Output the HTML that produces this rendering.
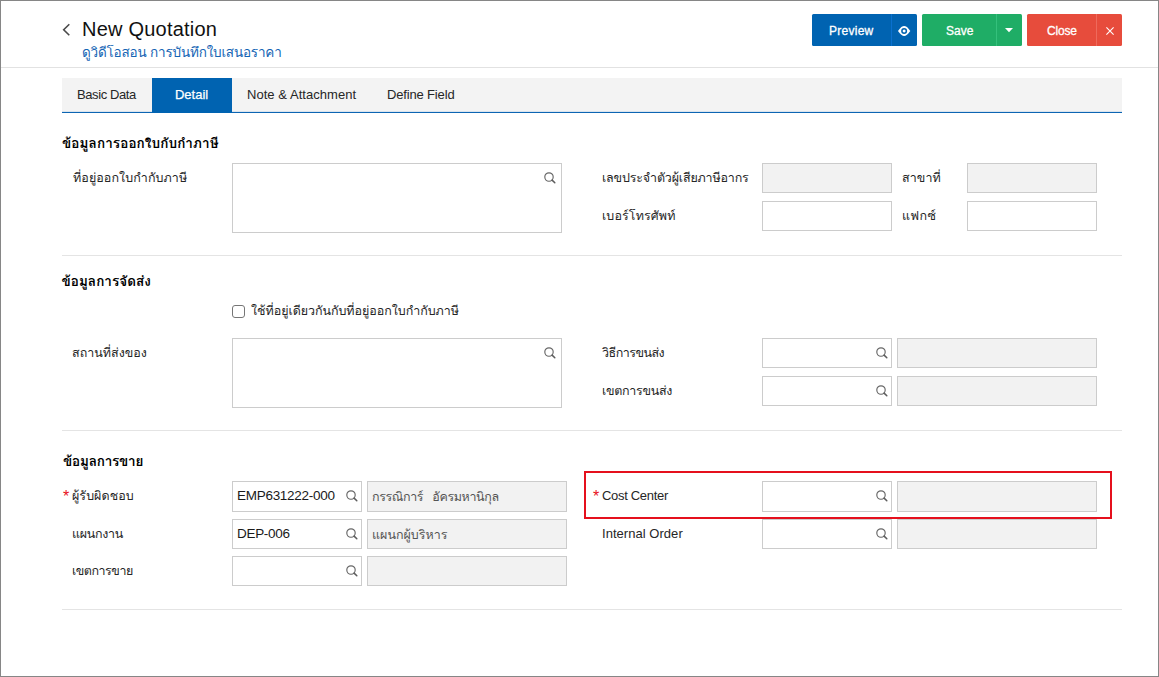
<!DOCTYPE html>
<html lang="th">
<head>
<meta charset="utf-8">
<title>New Quotation</title>
<style>
html,body{margin:0;padding:0;}
body{width:1159px;height:677px;overflow:hidden;background:#fff;position:relative;
  font-family:"Liberation Sans","Loma","Noto Sans Thai Looped","Sarabun","Noto Sans Thai","Tahoma",sans-serif;
  font-size:13px;color:#262626;}
#frame{position:absolute;left:0;top:0;width:1159px;height:677px;box-sizing:border-box;border:1px solid #868686;z-index:50;pointer-events:none;}
.abs{position:absolute;}
.t{position:absolute;white-space:nowrap;line-height:20px;height:20px;}
.th{font-size:12.5px;}
.h{font-weight:bold;color:#000;font-size:13.5px;}
.inp{position:absolute;box-sizing:border-box;border:1px solid #cccccc;background:#fff;height:30px;}
.dis{background:#f2f2f2;}
.sep{position:absolute;left:62px;width:1060px;height:1px;background:#e4e4e4;}
.btn{position:absolute;top:14px;height:32px;color:#fff;text-align:center;line-height:32px;font-size:12px;}
.val{position:absolute;left:5px;top:0;line-height:28px;white-space:nowrap;color:#1a1a1a;font-size:13.5px;}
.val.g{color:#555;top:1px;word-spacing:1.5px;font-size:12.5px;}
.bt{-webkit-text-stroke:0.3px #fff;position:absolute;top:1px;line-height:32px;white-space:nowrap;}
.req{position:absolute;color:#e8101c;font-size:16px;line-height:20px;}
svg{position:absolute;overflow:visible;}
</style>
</head>
<body>
<div id="frame"></div>

<svg width="0" height="0" style="left:0;top:0"><defs>
<g id="ic-s"><circle cx="5" cy="5" r="4.2" fill="none" stroke="#666" stroke-width="1.15"/><path d="M8.1 8.1 L10.8 10.8" stroke="#5c5c5c" stroke-width="1.5" stroke-linecap="round"/></g>
</defs></svg>
<!-- header -->
<svg style="left:60px;top:20px" width="14" height="20" viewBox="60 20 14 20"><path d="M69.3 24.3 L63.7 29.8 L69.3 35.3" fill="none" stroke="#4a4a4a" stroke-width="1.6"/></svg>
<div class="t" id="title" style="left:82px;letter-spacing:0.22px;top:15px;font-size:20px;line-height:28px;height:28px;color:#111;">New Quotation</div>
<div class="t" id="subtitle" style="left:82px;letter-spacing:-0.19px;top:43px;font-size:13.5px;color:#1464b4;">ดูวิดีโอสอน การบันทึกใบเสนอราคา</div>
<div class="abs" style="left:1px;top:67px;width:1157px;height:1px;background:#e2e2e2;"></div>

<!-- buttons -->
<div class="btn" style="left:812px;width:79px;background:#0063b1;border-radius:1.5px 0 0 1.5px;"><span id="b_prev" class="bt" style="left:17px;letter-spacing:0.26px;">Preview</span></div>
<div class="btn" style="left:891px;width:26px;background:#0063b1;border-left:1px solid #0a70cf;box-sizing:border-box;border-radius:0 1.5px 1.5px 0;"><svg style="left:5.5px;top:11.9px" width="12.3" height="9.9" viewBox="0 0 12.3 9.9"><path d="M0 4.95 C2.4 1.3 4.4 0 6.15 0 C7.9 0 9.9 1.3 12.3 4.95 C9.9 8.6 7.9 9.9 6.15 9.9 C4.4 9.9 2.4 8.6 0 4.95 Z" fill="#fff"/><circle cx="6.15" cy="4.95" r="3" fill="#0063b1"/><circle cx="6.15" cy="4.95" r="1.5" fill="#fff"/></svg></div>
<div class="btn" style="left:922px;width:74px;background:#1fad66;border-radius:1.5px 0 0 1.5px;"><span id="b_save" class="bt" style="left:24px;letter-spacing:0px;">Save</span></div>
<div class="btn" style="left:996px;width:26px;background:#1fad66;border-left:1px solid #35c07c;box-sizing:border-box;border-radius:0 1.5px 1.5px 0;"><svg style="left:8.3px;top:14.1px" width="8" height="4.2" viewBox="0 0 8 4.2"><path d="M0 0 L8 0 L4 4.2 Z" fill="#fff"/></svg></div>
<div class="btn" style="left:1027px;width:69px;background:#e74c3c;border-radius:1.5px 0 0 1.5px;"><span id="b_close" class="bt" style="left:20px;letter-spacing:-0.21px;">Close</span></div>
<div class="btn" style="left:1096px;width:26px;background:#e74c3c;border-left:1px solid #ee6a5c;box-sizing:border-box;border-radius:0 1.5px 1.5px 0;"><svg style="left:9px;top:12.6px" width="8" height="8" viewBox="0 0 8 8"><path d="M0.4 0.4 L7.6 7.6 M7.6 0.4 L0.4 7.6" stroke="#fff" stroke-width="1.1" fill="none"/></svg></div>

<!-- tabs -->
<div class="abs" style="left:62px;top:78px;width:1060px;height:33px;background:#f3f3f3;"></div>
<div class="abs" style="left:62px;top:111px;width:1060px;height:1px;background:#d9e4ee;"></div>
<div class="abs" style="left:62px;top:112px;width:1060px;height:1px;background:#0c65b3;"></div>
<div class="abs" style="left:152px;top:78px;width:80px;height:35px;background:#0063b1;"></div>
<div id="tab1" class="t" style="left:77px;letter-spacing:-0.4px;top:85px;">Basic Data</div>
<div id="tab2" class="t" style="left:175px;letter-spacing:-0.02px;top:85px;color:#fff;-webkit-text-stroke:0.25px #fff;">Detail</div>
<div id="tab3" class="t" style="left:247px;letter-spacing:0.04px;top:85px;">Note &amp; Attachment</div>
<div id="tab4" class="t" style="left:387px;letter-spacing:-0.16px;top:85px;">Define Field</div>

<!-- section 1 -->
<div id="h1" class="t h" style="left:62px;letter-spacing:0.1px;top:134px;">ข้อมูลการออกใบกับกำภาษี</div>
<div id="l_addr" class="t th" style="left:73px;letter-spacing:0.07px;top:168px;">ที่อยู่ออกใบกำกับภาษี</div>
<div class="inp" style="left:232px;top:163px;width:330px;height:70px;"><svg style="left:311.2px;top:8px" width="12" height="12"><use href="#ic-s"/></svg></div>
<div id="l_tax" class="t th" style="left:602px;letter-spacing:-0.18px;top:168px;">เลขประจำตัวผู้เสียภาษีอากร</div>
<div class="inp dis" style="left:762px;top:163px;width:130px;"></div>
<div id="l_branch" class="t th" style="left:902px;letter-spacing:0.1px;top:168px;">สาขาที่</div>
<div class="inp dis" style="left:967px;top:163px;width:130px;"></div>
<div id="l_tel" class="t th" style="left:602px;letter-spacing:0.1px;top:206px;">เบอร์โทรศัพท์</div>
<div class="inp" style="left:762px;top:201px;width:130px;"></div>
<div id="l_fax" class="t th" style="left:902px;letter-spacing:0.3px;top:206px;">แฟกซ์</div>
<div class="inp" style="left:967px;top:201px;width:130px;"></div>
<div class="sep" style="top:255px;"></div>

<!-- section 2 -->
<div id="h2" class="t h" style="left:61.5px;letter-spacing:0.04px;top:272px;">ข้อมูลการจัดส่ง</div>
<div class="abs" style="left:232px;top:305px;width:13px;height:13px;box-sizing:border-box;border:1px solid #767676;border-radius:3px;background:#fff;"></div>
<div id="l_chk" class="t th" style="left:251px;letter-spacing:-0.05px;top:301px;">ใช้ที่อยู่เดียวกันกับที่อยู่ออกใบกำกับภาษี</div>
<div id="l_place" class="t th" style="left:72px;letter-spacing:0px;top:343px;">สถานที่ส่งของ</div>
<div class="inp" style="left:232px;top:338px;width:330px;height:70px;"><svg style="left:311.2px;top:8px" width="12" height="12"><use href="#ic-s"/></svg></div>
<div id="l_method" class="t th" style="left:602px;letter-spacing:-0.51px;top:343px;">วิธีการขนส่ง</div>
<div class="inp" style="left:762px;top:338px;width:130px;"><svg style="left:113.1px;top:8px" width="12" height="12"><use href="#ic-s"/></svg></div>
<div class="inp dis" style="left:897px;top:338px;width:200px;"></div>
<div id="l_zone" class="t th" style="left:602px;letter-spacing:-0.3px;top:381px;">เขตการขนส่ง</div>
<div class="inp" style="left:762px;top:376px;width:130px;"><svg style="left:113.1px;top:8px" width="12" height="12"><use href="#ic-s"/></svg></div>
<div class="inp dis" style="left:897px;top:376px;width:200px;"></div>
<div class="sep" style="top:430px;"></div>

<!-- section 3 -->
<div id="h3" class="t h" style="left:63px;letter-spacing:-0.2px;top:452px;">ข้อมูลการขาย</div>
<div class="req" style="left:63px;top:487px;">*</div>
<div id="l_resp" class="t th" style="left:72px;letter-spacing:0.05px;top:486px;">ผู้รับผิดชอบ</div>
<div class="inp" style="left:232px;top:481px;width:130px;height:31px;"><span id="v_emp" class="val" style="left:4px;letter-spacing:-0.28px;">EMP631222-000</span><svg style="left:113.1px;top:8px" width="12" height="12"><use href="#ic-s"/></svg></div>
<div class="inp dis" style="left:367px;top:481px;width:200px;height:31px;"><span id="v_name" class="val g th" style="left:4px;letter-spacing:-0.39px;">กรรณิการ์&nbsp; อัครมหานิกุล</span></div>
<div id="l_dept" class="t th" style="left:72px;letter-spacing:-0.3px;top:524px;">แผนกงาน</div>
<div class="inp" style="left:232px;top:519px;width:130px;"><span id="v_dep" class="val" style="left:4px;letter-spacing:-0.3px;">DEP-006</span><svg style="left:113.1px;top:8px" width="12" height="12"><use href="#ic-s"/></svg></div>
<div class="inp dis" style="left:367px;top:519px;width:200px;"><span id="v_deptname" class="val g th" style="left:4px;letter-spacing:0px;">แผนกผู้บริหาร</span></div>
<div id="l_sales" class="t th" style="left:72px;letter-spacing:-0.48px;top:561px;">เขตการขาย</div>
<div class="inp" style="left:232px;top:556px;width:130px;"><svg style="left:113.1px;top:8px" width="12" height="12"><use href="#ic-s"/></svg></div>
<div class="inp dis" style="left:367px;top:556px;width:200px;"></div>

<div class="req" style="left:593px;top:487px;">*</div>
<div id="l_cost" class="t" style="left:602px;letter-spacing:-0.31px;top:486px;">Cost Center</div>
<div class="inp" style="left:762px;top:481px;width:130px;height:31px;"><svg style="left:113.1px;top:8px" width="12" height="12"><use href="#ic-s"/></svg></div>
<div class="inp dis" style="left:897px;top:481px;width:200px;height:31px;"></div>
<div id="l_io" class="t" style="left:602px;letter-spacing:0.04px;top:524px;">Internal Order</div>
<div class="inp" style="left:762px;top:519px;width:130px;"><svg style="left:113.1px;top:8px" width="12" height="12"><use href="#ic-s"/></svg></div>
<div class="inp dis" style="left:897px;top:519px;width:200px;"></div>
<div id="redbox" class="abs" style="left:584px;top:471px;width:528px;height:48px;box-sizing:border-box;border:2px solid #e5101d;"></div>
<div class="sep" style="top:609px;"></div>

</body>
</html>
